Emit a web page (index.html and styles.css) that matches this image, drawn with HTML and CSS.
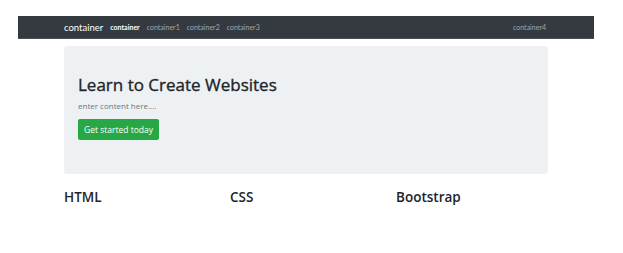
FILE: index.html
```html
<!DOCTYPE html>
<html>
<head>
<meta charset="utf-8">
<link rel="stylesheet" href="styles.css">
</head>
<body>
<nav class="navbar">
  <div class="nav-inner">
    <a class="brand">container</a>
    <ul class="links">
      <li class="active">container</li>
      <li>container1</li>
      <li>container2</li>
      <li>container3</li>
    </ul>
    <ul class="links right">
      <li>container4</li>
    </ul>
  </div>
</nav>
<main class="container">
  <section class="jumbotron">
    <h1>Learn to Create Websites</h1>
    <p class="lead">enter content here....</p>
    <a class="btn">Get started today</a>
  </section>
  <div class="row">
    <div class="col"><h2>HTML</h2></div>
    <div class="col"><h2>CSS</h2></div>
    <div class="col"><h2>Bootstrap</h2></div>
  </div>
</main>
</body>
</html>
```
FILE: styles.css
```css
* { box-sizing: border-box; }
body {
  margin: 0;
  padding: 16px 0 0 18px;
  font-family: "Open Sans", "Noto Sans", sans-serif;
  color: #212529;
  background: #fff;
  width: 623px;
  height: 253px;
}
.navbar {
  width: 576px;
  height: 23px;
  background: #343a40;
  border-bottom: 1px solid #4a5058;
}
.nav-inner {
  display: flex;
  align-items: center;
  height: 100%;
  padding: 0 48px 0 46px;
}
.brand {
  font-family: Lato, sans-serif;
  font-size: 9.5px;
  color: #fff;
  margin-right: 7px;
}
.links {
  display: flex;
  gap: 7px;
  list-style: none;
  margin: 0;
  padding: 0;
  font-family: Lato, sans-serif;
  font-size: 7px;
  color: #a3a6aa;
}
.links .active { color: #fff; font-weight: 700; }
.links.right { margin-left: auto; }
.container {
  margin-left: 46px;
  padding-top: 7px;
}
.jumbotron {
  width: 484px;
  height: 128px;
  background: #eef1f4;
  border-radius: 3px;
  padding: 28px 14px 0;
}
h1 {
  margin: 0;
  font-size: 17px;
  font-weight: 400;
  -webkit-text-stroke: 0.35px #212529;
  line-height: 22px;
}
.lead {
  margin: 5px 0 5px;
  font-size: 8px;
  color: #6c757d;
  line-height: 10px;
}
.btn {
  display: inline-block;
  background: #28a745;
  color: #fff;
  font-size: 8.5px;
  line-height: 21px;
  height: 21px;
  width: 81px;
  text-align: center;
  border-radius: 2px;
}
.row {
  display: grid;
  grid-template-columns: 166px 166px 166px;
  padding-top: 14px;
}
h2 {
  margin: 0;
  font-size: 13.5px;
  font-weight: 600;
  line-height: 18px;
}
```
